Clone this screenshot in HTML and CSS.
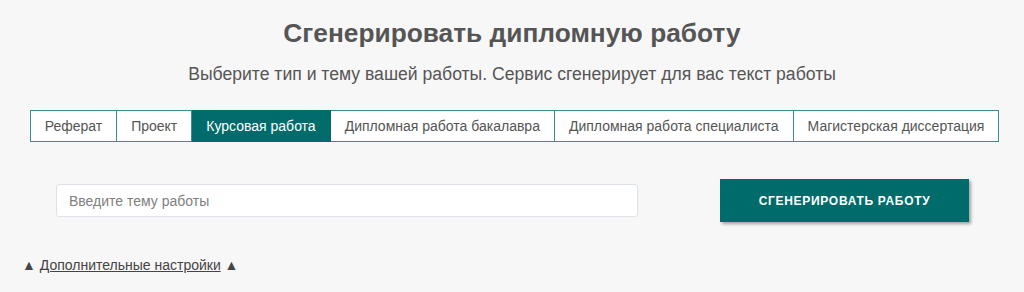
FILE: index.html
```html
<!DOCTYPE html>
<html lang="ru">
<head>
    <meta charset="UTF-8">
    <meta name="viewport" content="width=device-width, initial-scale=1.0">
    <title>Сгенерировать дипломную работу</title>
    <link rel="stylesheet" href="styles.css">
</head>
<body>
    <div class="generator">
        <h1>Сгенерировать дипломную работу</h1>
        <p class="subtitle">Выберите тип и тему вашей работы. Сервис сгенерирует для вас текст работы</p>

        <div class="tabs">
            <span class="tab">Реферат</span>
            <span class="tab">Проект</span>
            <span class="tab active">Курсовая работа</span>
            <span class="tab">Дипломная работа бакалавра</span>
            <span class="tab">Дипломная работа специалиста</span>
            <span class="tab">Магистерская диссертация</span>
        </div>

        <div class="form-row">
            <input type="text" class="topic" placeholder="Введите тему работы">
            <button class="generate-btn">Сгенерировать работу</button>
        </div>

        <div class="more">▲ <a href="#">Дополнительные настройки</a> ▲</div>
    </div>
</body>
</html>
```

FILE: styles.css
```css
body {
    font-family: "Liberation Sans", Arial, sans-serif;
    background-color: #f7f7f7;
    margin: 0;
    color: #555;
}
.generator {
    width: 1024px;
}
h1 {
    margin: 18px 0 0;
    font-size: 26.3px;
    line-height: 30px;
    text-align: center;
    color: #555;
}
.subtitle {
    margin: 16px 0 0;
    font-size: 17.6px;
    line-height: 20px;
    text-align: center;
    color: #555;
}
.tabs {
    display: flex;
    justify-content: center;
    margin-top: 26px;
    padding-left: 5px;
}
.tab {
    font-size: 14px;
    line-height: 30px;
    padding: 0 14px;
    background: white;
    color: #555;
    border: 1px solid #3b8e8e;
    border-left: none;
}
.tab:first-child {
    border-left: 1px solid #3b8e8e;
}
.tab.active {
    background-color: #006b6b;
    border-color: #006b6b;
    color: white;
}
.form-row {
    display: flex;
    align-items: center;
    margin-top: 37px;
    padding-left: 56px;
    gap: 82px;
}
.topic {
    width: 582px;
    height: 33px;
    box-sizing: border-box;
    border: 1px solid #dde2e8;
    border-radius: 3px;
    background: white;
    padding: 0 12px;
    font-family: inherit;
    font-size: 14px;
    color: #555;
}
.topic::placeholder {
    color: #808080;
}
.generate-btn {
    width: 249px;
    height: 43px;
    border: none;
    background-color: #006b6b;
    color: white;
    font-family: inherit;
    font-weight: bold;
    font-size: 12px;
    letter-spacing: 0.7px;
    text-transform: uppercase;
    box-shadow: 2px 2px 3px rgba(0,0,0,0.35);
    cursor: pointer;
}
.more {
    margin-top: 35px;
    padding-left: 22px;
    font-size: 14px;
    color: #444;
}
.more a {
    color: #444;
}
```
